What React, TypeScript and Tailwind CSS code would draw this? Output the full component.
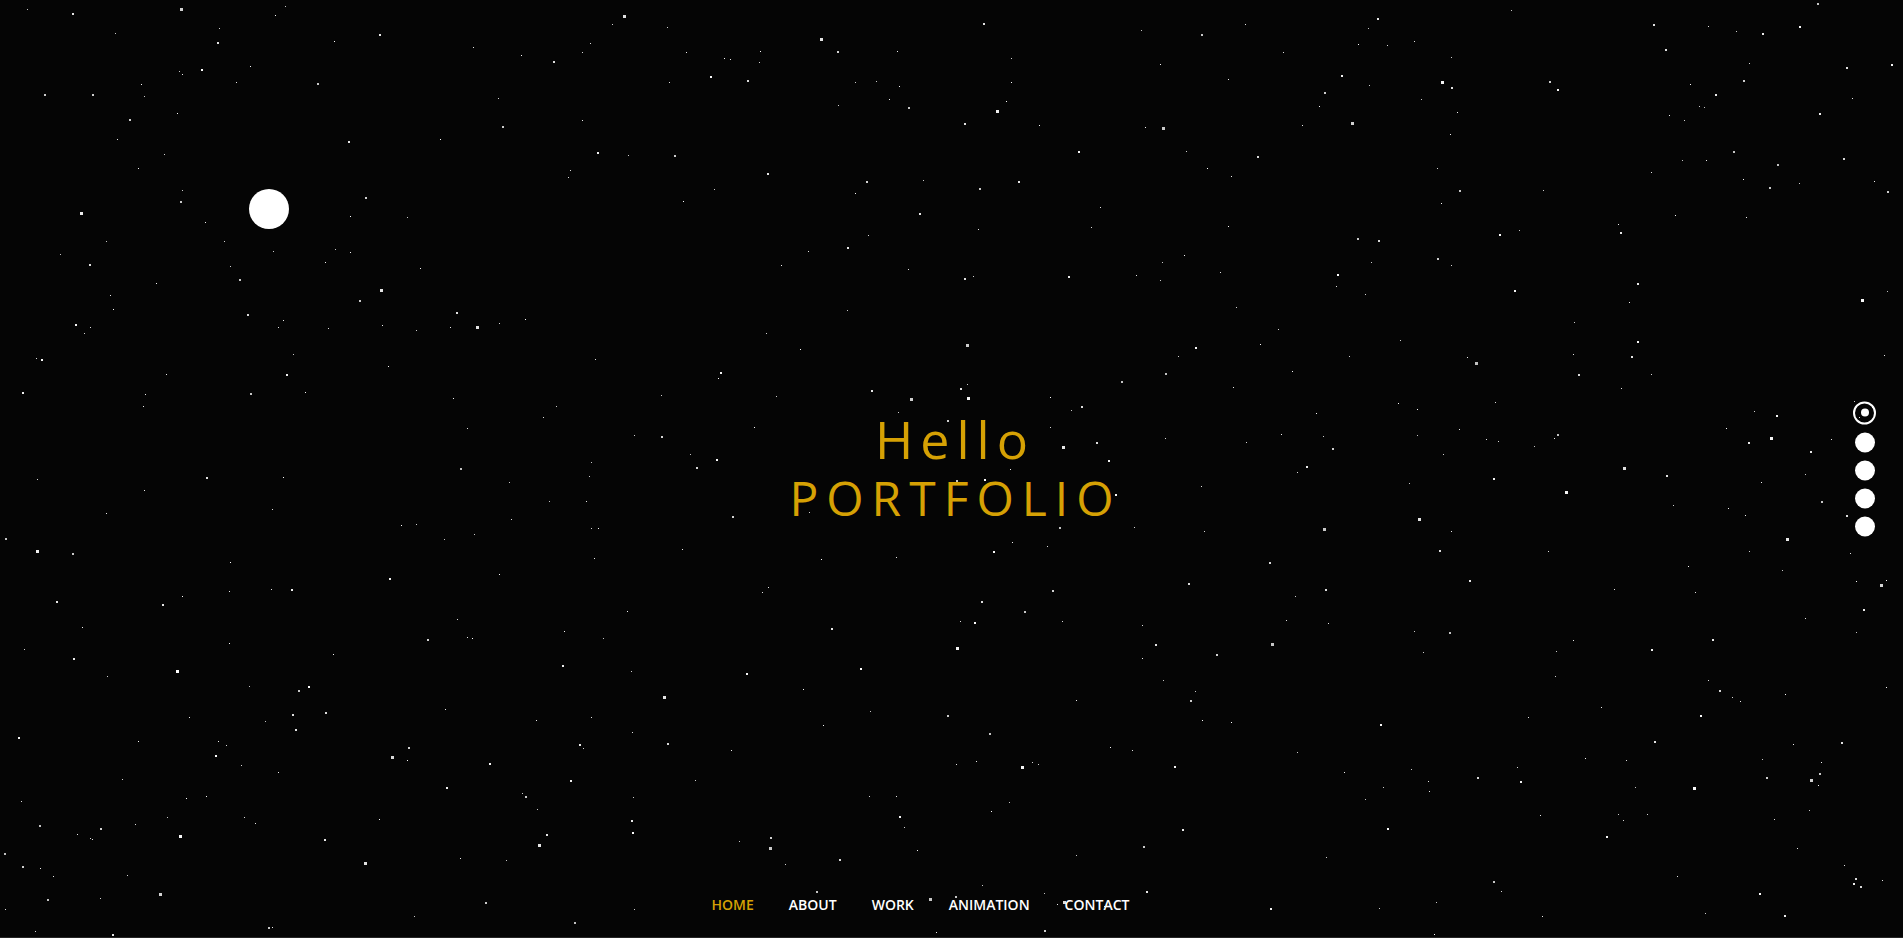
import { useMemo } from 'react'

// small seeded rng so the star field is the same every render
const mulberry32 = (seed: number) => () => {
  seed |= 0
  seed = (seed + 0x6d2b79f5) | 0
  let t = Math.imul(seed ^ (seed >>> 15), 1 | seed)
  t = (t + Math.imul(t ^ (t >>> 7), 61 | t)) ^ t
  return ((t ^ (t >>> 14)) >>> 0) / 4294967296
}

interface Star {
  x: number
  y: number
  size: number
  opacity: number
}

const NAV_ITEMS = ['HOME', 'ABOUT', 'WORK', 'ANIMATION', 'CONTACT']

const StarField = () => {
  const stars = useMemo<Star[]>(() => {
    const rand = mulberry32(20240611)
    const list: Star[] = []
    for (let i = 0; i < 620; i++) {
      const r = rand()
      list.push({
        x: rand() * 100,
        y: rand() * 100,
        size: r < 0.58 ? 1 : r < 0.93 ? 2 : 3,
        opacity: 0.75 + rand() * 0.25,
      })
    }
    return list
  }, [])

  return (
    <div className="absolute inset-0 pointer-events-none">
      {stars.map((s, i) => (
        <span
          key={i}
          className="absolute bg-white"
          style={{
            left: `${s.x}%`,
            top: `${s.y}%`,
            width: s.size,
            height: s.size,
            opacity: s.opacity,
          }}
        />
      ))}
    </div>
  )
}

export default function App() {
  return (
    <div
      className="relative h-screen w-full overflow-hidden bg-[#050505] border-b border-[#262626]"
      style={{ fontFamily: '"Open Sans", "Noto Sans", sans-serif' }}
    >
      <StarField />

      {/* Moon */}
      <div className="absolute left-[249px] top-[189px] h-10 w-10 rounded-full bg-white" />

      {/* Hero title */}
      <div className="relative flex h-full flex-col items-center justify-center text-[#d6a104]">
        <h1 className="pl-[7px] text-[52px] font-normal leading-[58px] tracking-[7px]">Hello</h1>
        <h2 className="pl-[8px] text-[48px] font-normal leading-[60px] tracking-[8px]">PORTFOLIO</h2>
      </div>

      {/* Section dots */}
      <div className="absolute right-[27px] top-1/2 flex -translate-y-1/2 flex-col items-center gap-2">
        <div className="flex h-[23px] w-[23px] items-center justify-center rounded-full border-2 border-white">
          <div className="h-2 w-2 rounded-full bg-white" />
        </div>
        <div className="h-5 w-5 rounded-full bg-white" />
        <div className="h-5 w-5 rounded-full bg-white" />
        <div className="h-5 w-5 rounded-full bg-white" />
        <div className="h-5 w-5 rounded-full bg-white" />
      </div>

      {/* Bottom nav */}
      <nav className="absolute bottom-[22px] left-0 right-0 flex justify-center pr-[62px]">
        <ul className="flex gap-[35px]">
          {NAV_ITEMS.map((item, i) => (
            <li
              key={item}
              className={`text-sm font-semibold leading-5 ${i === 0 ? 'text-[#d6a104]' : 'text-white'}`}
            >
              {item}
            </li>
          ))}
        </ul>
      </nav>
    </div>
  )
}
